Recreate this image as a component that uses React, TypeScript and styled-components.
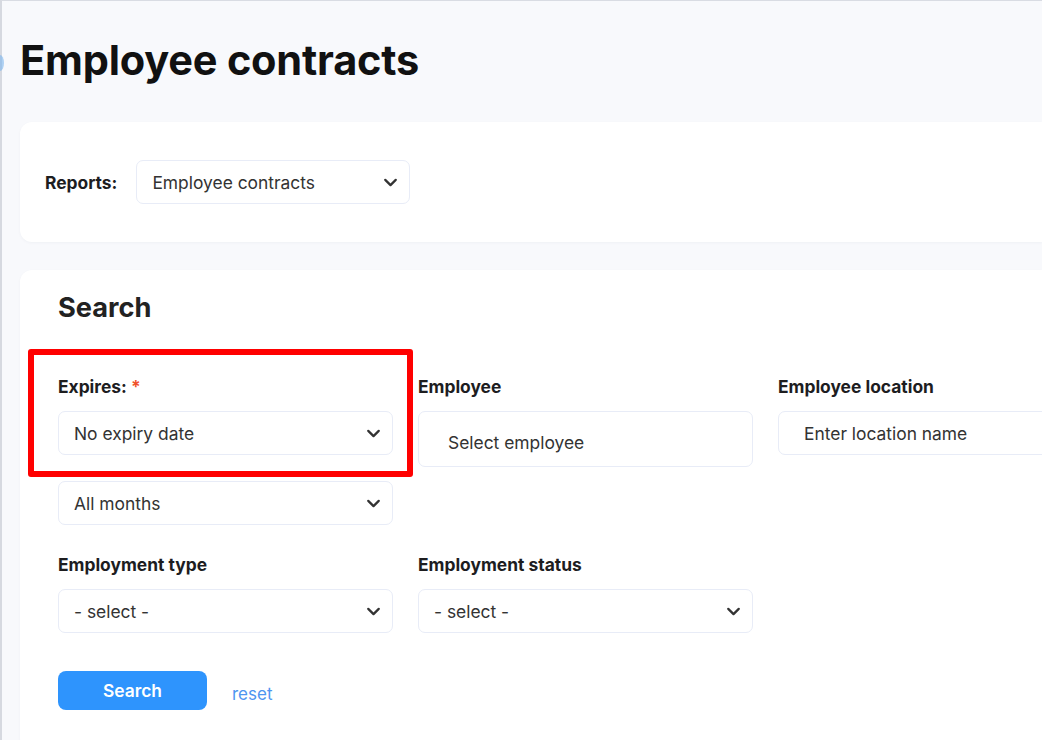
import React, { FC } from "react";
import styled, { createGlobalStyle } from "styled-components";
import { ChevronDown } from "lucide-react";

const GlobalStyle = createGlobalStyle`
  html, body {
    margin: 0;
    padding: 0;
    height: 100%;
    overflow: hidden;
  }
  body {
    font-family: Inter, "Noto Sans", "Liberation Sans", sans-serif;
    background: #f8f9fc;
    color: #1d1d1f;
  }
  * { box-sizing: border-box; }
`;

const Page = styled.div`
  position: relative;
  min-height: 740px;
  border-top: 1px solid #d9dce3;
  border-left: 2px solid #d6d9e0;
  padding: 0 0 0 18px;
`;

const EdgeDot = styled.span`
  position: absolute;
  left: -6px;
  top: 54px;
  width: 8px;
  height: 16px;
  border-radius: 50%;
  background: #7db6ec;
  opacity: 0.6;
`;

const Title = styled.h1`
  margin: 0;
  padding-top: 35px;
  font-size: 41.5px;
  line-height: 48px;
  font-weight: 700;
  color: #111;
  letter-spacing: -0.2px;
`;

const Card = styled.section<{ $mt: number }>`
  margin-top: ${(p) => p.$mt}px;
  background: #fff;
  border-radius: 12px 0 0 12px;
  box-shadow: 0 1px 3px rgba(30, 40, 80, 0.04);
`;

const ReportsCard = styled(Card)`
  height: 120px;
  padding: 0 25px;
  display: flex;
  align-items: center;
  gap: 19px;
`;

const InlineLabel = styled.span`
  font-size: 17.4px;
  font-weight: 700;
  color: #1d1d1f;
`;

const SelectBox = styled.div<{ $w: number; $h?: number; $pl?: number; $pt?: number }>`
  width: ${(p) => p.$w}px;
  height: ${(p) => p.$h ?? 44}px;
  border: 1.5px solid #e8ecf7;
  border-radius: 7px;
  background: #fff;
  display: flex;
  align-items: center;
  justify-content: space-between;
  padding: ${(p) => p.$pt ?? 0}px 8px 0 ${(p) => p.$pl ?? 15}px;
  font-size: 17.4px;
  color: #333;
  svg {
    color: #333;
    flex-shrink: 0;
  }
`;

const SearchCard = styled(Card)`
  padding: 22px 38px 40px;
  min-height: 480px;
`;

const SectionTitle = styled.h2`
  margin: 0 0 52px;
  font-size: 27.2px;
  line-height: 32px;
  font-weight: 700;
  color: #222;
`;

const FieldGrid = styled.div`
  display: grid;
  grid-template-columns: repeat(3, 335px);
  column-gap: 25px;
  row-gap: 29px;
  align-items: start;
`;

const Field = styled.div`
  display: flex;
  flex-direction: column;
  gap: 26px;
`;

const LabelGroup = styled.div`
  position: relative;
  display: flex;
  flex-direction: column;
  gap: 14px;
`;

const Highlight = styled.div`
  position: absolute;
  inset: -27px -20px -22px -30px;
  border: 6px solid #ff0000;
  border-radius: 3px;
  pointer-events: none;
`;

const Label = styled.label`
  font-size: 17.4px;
  line-height: 21px;
  font-weight: 700;
  color: #1d1d1f;
`;

const Required = styled.span`
  color: #f0522a;
  margin-left: 4px;
`;

const Actions = styled.div`
  margin-top: 38px;
  display: flex;
  align-items: center;
  gap: 25px;
`;

const PrimaryButton = styled.button`
  width: 149px;
  height: 39px;
  border: none;
  border-radius: 8px;
  background: #2e94fd;
  color: #fff;
  font-family: inherit;
  font-size: 17.4px;
  font-weight: 600;
`;

const ResetLink = styled.a`
  color: #4d95f0;
  font-size: 17px;
  margin-top: 6px;
`;

interface SelectProps {
  value: string;
  width?: number;
  pl?: number;
}

const Select: FC<SelectProps> = ({ value, width = 335, pl = 15 }) => (
  <SelectBox $w={width} $pl={pl}>
    <span>{value}</span>
    <ChevronDown size={21} strokeWidth={2.6} />
  </SelectBox>
);

const App: FC = () => {
  return (
    <>
      <GlobalStyle />
      <Page>
        <EdgeDot />
        <Title>Employee contracts</Title>

        <ReportsCard $mt={38}>
          <InlineLabel>Reports:</InlineLabel>
          <Select value="Employee contracts" width={274} />
        </ReportsCard>

        <SearchCard $mt={28}>
          <SectionTitle>Search</SectionTitle>
          <FieldGrid>
            <Field>
              <LabelGroup>
                <Highlight />
                <Label>
                  Expires:<Required>*</Required>
                </Label>
                <Select value="No expiry date" />
              </LabelGroup>
              <Select value="All months" />
            </Field>

            <LabelGroup>
              <Label>Employee</Label>
              <SelectBox $w={335} $h={56} $pl={29} $pt={6}>
                <span>Select employee</span>
              </SelectBox>
            </LabelGroup>

            <LabelGroup>
              <Label>Employee location</Label>
              <SelectBox $w={335} $pl={25}>
                <span>Enter location name</span>
              </SelectBox>
            </LabelGroup>

            <LabelGroup>
              <Label>Employment type</Label>
              <Select value="- select -" />
            </LabelGroup>

            <LabelGroup>
              <Label>Employment status</Label>
              <Select value="- select -" />
            </LabelGroup>
          </FieldGrid>

          <Actions>
            <PrimaryButton>Search</PrimaryButton>
            <ResetLink>reset</ResetLink>
          </Actions>
        </SearchCard>
      </Page>
    </>
  );
};

export default App;
